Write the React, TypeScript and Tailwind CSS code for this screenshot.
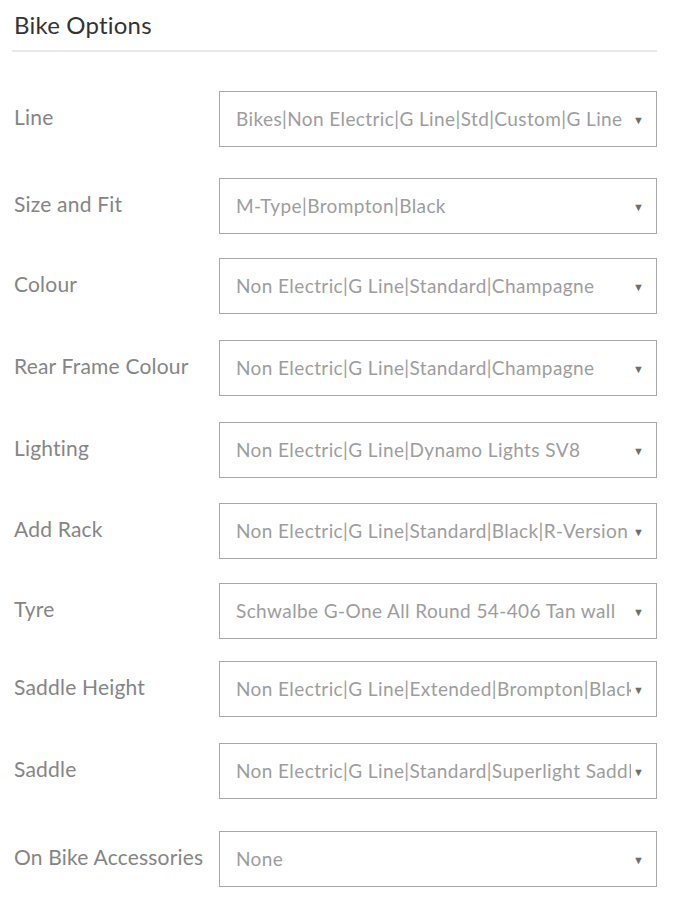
const OPTIONS = [
  { label: "Line", value: "Bikes|Non Electric|G Line|Std|Custom|G Line", mt: "mt-[39px]" },
  { label: "Size and Fit", value: "M-Type|Brompton|Black", mt: "mt-[31px]" },
  { label: "Colour", value: "Non Electric|G Line|Standard|Champagne", mt: "mt-[24px]" },
  { label: "Rear Frame Colour", value: "Non Electric|G Line|Standard|Champagne", mt: "mt-[26px]" },
  { label: "Lighting", value: "Non Electric|G Line|Dynamo Lights SV8", mt: "mt-[26px]" },
  { label: "Add Rack", value: "Non Electric|G Line|Standard|Black|R-Version", mt: "mt-[25px]" },
  { label: "Tyre", value: "Schwalbe G-One All Round 54-406 Tan wall", mt: "mt-[24px]" },
  { label: "Saddle Height", value: "Non Electric|G Line|Extended|Brompton|Black", mt: "mt-[22px]" },
  { label: "Saddle", value: "Non Electric|G Line|Standard|Superlight Saddle", mt: "mt-[26px]" },
  { label: "On Bike Accessories", value: "None", mt: "mt-[32px]" },
];

function SelectBox({ value }: { value: string }) {
  return (
    <div className="flex h-[56px] w-[438px] items-center border border-[#a8a8a8] bg-white pl-[16px] pr-[12px]">
      <div className="min-w-0 flex-1 overflow-hidden whitespace-nowrap text-[19px] tracking-[0.4px] text-[#9d9d9d]">
        {value}
      </div>
      <span className="ml-[2px] shrink-0 text-[11px] leading-none text-[#6e6e6e]">▼</span>
    </div>
  );
}

export default function App() {
  return (
    <div
      className="min-h-[900px] w-[675px] bg-white pl-[12px] pr-[18px] pt-[9px]"
      style={{ fontFamily: "Lato, 'Open Sans', sans-serif" }}
    >
      <h2 className="pl-[2px] text-[24px] leading-[32px] tracking-[0.2px] text-[#333]">Bike Options</h2>
      <div className="mt-[9px] h-[2px] bg-[#e8e8e8]" />

      <div className="flex flex-col">
        {OPTIONS.map((o) => (
          <div key={o.label} className={`flex items-center justify-between ${o.mt}`}>
            <span className="pb-[4px] pl-[2px] text-[21px] tracking-[0.2px] text-[#858585]">{o.label}</span>
            <SelectBox value={o.value} />
          </div>
        ))}
      </div>
    </div>
  );
}
